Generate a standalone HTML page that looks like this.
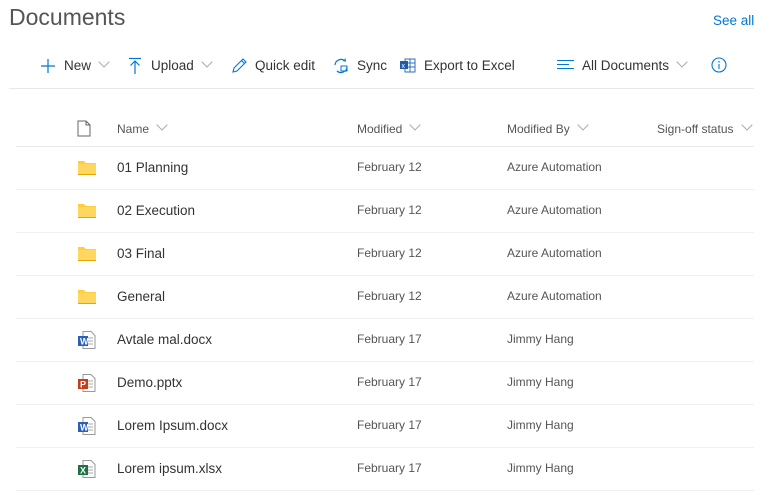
<!DOCTYPE html>
<html><head><style>
*{margin:0;padding:0;box-sizing:border-box}
body{width:771px;height:495px;background:#fff;font-family:"Segoe UI","Liberation Sans",sans-serif;color:#333;position:relative;overflow:hidden}
.a{position:absolute;white-space:nowrap}
.title{left:9px;top:4px;font-size:23px;font-weight:300;color:#555}
.see{left:713px;top:13px;font-size:13.5px;color:#0078d4}
.tb{top:58px;font-size:13.5px;color:#333}
.sep{position:absolute;height:1px;background:#e8e8e8}
.hd{top:122px;font-size:12px;color:#555}
.nm{font-size:13.5px;color:#333}
.sm{font-size:12px;color:#555}
.ch{display:inline-block;width:8px;height:8px;border-right:1px solid #aaa;border-bottom:1px solid #aaa;transform:rotate(45deg);margin-left:9px;position:relative;top:-4px}
</style></head><body>
<div class="a title">Documents</div>
<div class="a see">See all</div>

<svg class="a" style="left:40px;top:58px" width="16" height="16"><path d="M8 1v14M1 8h14" stroke="#0078d4" stroke-width="1.2"/></svg>
<div class="a tb" style="left:64px">New<span class="ch"></span></div>
<svg class="a" style="left:128px;top:57px" width="14" height="18"><path d="M1 1.5h12M7 4v13M2.5 8.5L7 4l4.5 4.5" stroke="#0078d4" stroke-width="1.2" fill="none"/></svg>
<div class="a tb" style="left:151px">Upload<span class="ch"></span></div>
<svg class="a" style="left:231px;top:57px" width="17" height="17"><path d="M2 15l1-4L12 2l3 3-9 9z M10.5 3.5l3 3" stroke="#0078d4" stroke-width="1.1" fill="none"/></svg>
<div class="a tb" style="left:255px">Quick edit</div>
<svg class="a" style="left:332px;top:57px" width="18" height="18"><path d="M3 8a6 6 0 0 1 10-4M15 10a6 6 0 0 1-10 4" stroke="#0078d4" stroke-width="1.2" fill="none"/><rect x="9" y="9" width="6" height="5" stroke="#0078d4" fill="none"/><path d="M11 3.5l2.5.5-.5-2.5" stroke="#0078d4" fill="none"/></svg>
<div class="a tb" style="left:357px">Sync</div>
<svg class="a" style="left:400px;top:58px" width="16" height="15"><rect x="5" y="1" width="10" height="13" fill="none" stroke="#2b6fc2"/><path d="M5 5h10M5 9h10M10 1v13" stroke="#2b6fc2"/><rect x="0" y="3" width="8" height="8" fill="#1e5ca8"/><text x="1.5" y="10" font-size="7" fill="#fff" font-family="Liberation Sans">x</text></svg>
<div class="a tb" style="left:424px">Export to Excel</div>
<svg class="a" style="left:557px;top:59px" width="18" height="12"><path d="M0 1.5h17M0 5.5h12M0 9.5h17" stroke="#0078d4" stroke-width="1.1"/></svg>
<div class="a tb" style="left:582px">All Documents<span class="ch"></span></div>
<svg class="a" style="left:711px;top:57px" width="16" height="16"><circle cx="8" cy="8" r="7" fill="none" stroke="#0078d4" stroke-width="1.1"/><path d="M8 7v5" stroke="#0078d4" stroke-width="1.1"/><circle cx="8" cy="4.8" r=".8" fill="#0078d4"/></svg>
<div class="sep" style="left:9px;top:88px;width:745px"></div>

<svg class="a" style="left:77px;top:120px" width="14" height="17"><path d="M1 1h8l4 4v11H1z M9 1v4h4" stroke="#666" fill="none"/></svg>
<div class="a hd" style="left:117px">Name<span class="ch"></span></div>
<div class="a hd" style="left:357px">Modified<span class="ch"></span></div>
<div class="a hd" style="left:507px">Modified By<span class="ch"></span></div>
<div class="a hd" style="left:657px">Sign-off status<span class="ch"></span></div>
<div class="sep" style="left:16px;top:146px;width:738px"></div>

<div id="rows"></div>
<script>
var d=[["f","01 Planning","February 12","Azure Automation"],["f","02 Execution","February 12","Azure Automation"],["f","03 Final","February 12","Azure Automation"],["f","General","February 12","Azure Automation"],["w","Avtale mal.docx","February 17","Jimmy Hang"],["p","Demo.pptx","February 17","Jimmy Hang"],["w","Lorem Ipsum.docx","February 17","Jimmy Hang"],["x","Lorem ipsum.xlsx","February 17","Jimmy Hang"]];
var h="";
d.forEach(function(r,i){var y=147+i*43;var c=y+21;
var ic;
if(r[0]=="f")ic='<svg class="a" style="left:78px;top:'+(c-8)+'px" width="18" height="15"><path d="M0 1h6l2 2h10v12H0z" fill="#ffce3d"/><path d="M0 4h18v11H0z" fill="#ffd75e"/><rect x="0" y="14" width="18" height="1" fill="#e0a800"/></svg>';
else{var col={w:"#2b5fb8",p:"#c43e1c",x:"#1f7244"}[r[0]],L={w:"W",p:"P",x:"X"}[r[0]];
ic='<svg class="a" style="left:78px;top:'+(c-9)+'px" width="18" height="18"><path d="M5 0.5h8l4 4v13H5z" fill="#fff" stroke="#999"/><path d="M9 7h6M9 10h6M9 13h6" stroke="#aaa"/><rect x="0" y="5" width="10" height="10" fill="'+col+'"/><text x="2" y="13.5" font-size="9" font-weight="bold" fill="#fff" font-family="Liberation Sans">'+L+'</text></svg>';}
h+=ic+'<div class="a nm" style="left:117px;top:'+(c-8)+'px">'+r[1]+'</div><div class="a sm" style="left:357px;top:'+(c-8)+'px">'+r[2]+'</div><div class="a sm" style="left:507px;top:'+(c-8)+'px">'+r[3]+'</div><div class="sep" style="left:16px;top:'+(y+42)+'px;width:738px;background:#f0f0f0"></div>';});
document.getElementById("rows").innerHTML=h;
</script>
</body></html>
